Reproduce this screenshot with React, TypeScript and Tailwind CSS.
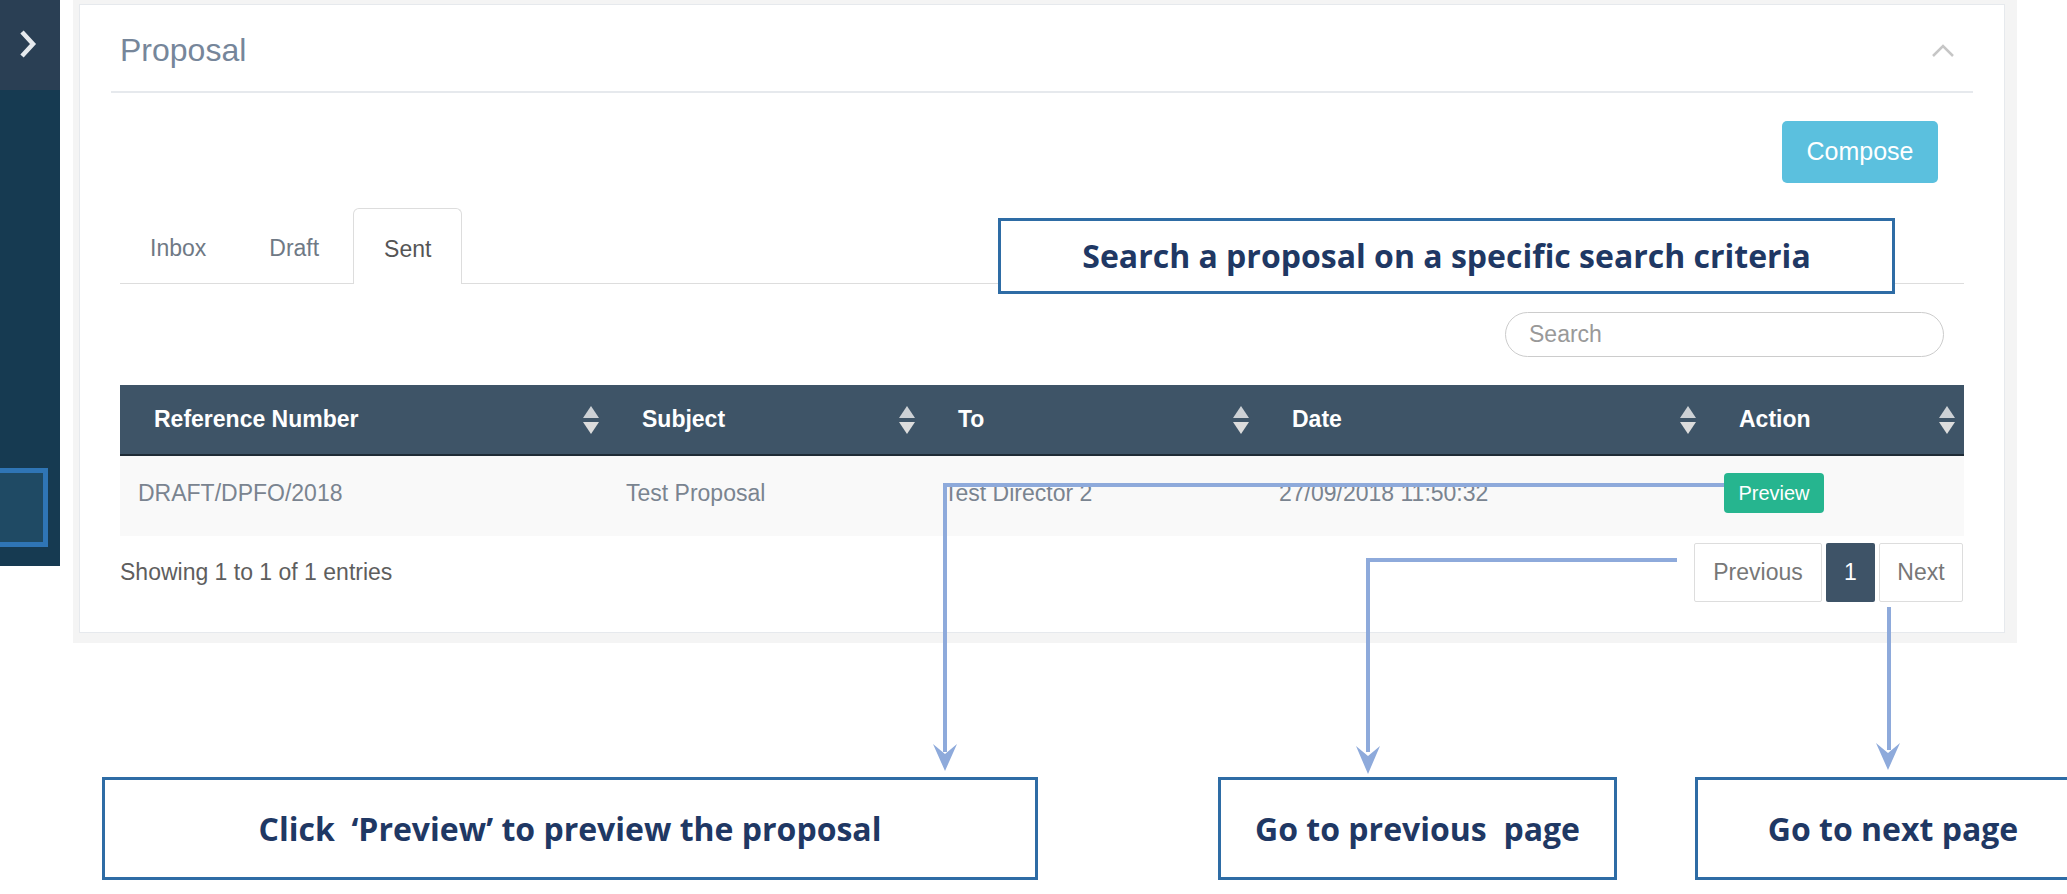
import React from 'react'

const cols = [
  { label: 'Reference Number', w: 'w-[488px]' },
  { label: 'Subject', w: 'w-[316px]' },
  { label: 'To', w: 'w-[334px]' },
  { label: 'Date', w: 'w-[447px]' },
  { label: 'Action', w: 'w-[259px]' },
]

const SortIcon = () => (
  <svg width="16" height="28" viewBox="0 0 16 28">
    <polygon points="8,0 16,12 0,12" fill="#cdd1d5" />
    <polygon points="0,16 16,16 8,28" fill="#dcdcdc" />
  </svg>
)

const Callout = ({ className, children }: { className: string; children: React.ReactNode }) => (
  <div
    className={`absolute flex items-center justify-center bg-white border-[3px] border-[#2e6ca5] font-['Open_Sans',sans-serif] font-bold text-[32px] text-[#1f3864] whitespace-pre ${className}`}
  >
    {children}
  </div>
)

export default function App() {
  return (
    <div className="relative w-[2067px] h-[894px] overflow-hidden bg-white font-['Liberation_Sans',Arial,sans-serif]">
      <div className="flex items-start">
        {/* sidebar */}
        <aside className="flex flex-col w-[60px] h-[566px]">
          <div className="flex h-[90px] items-center justify-center bg-[#2a3f54] pb-[2px] pr-[4px]">
            <svg width="20" height="32" viewBox="0 0 20 32">
              <polyline points="4,4 15,16 4,28" fill="none" stroke="#e6eaee" strokeWidth="4.5" />
            </svg>
          </div>
          <div className="flex-1 bg-[#163a51] pt-[378px]">
            <div className="w-[48px] h-[79px] border-[5px] border-l-0 border-[#2f75b5] bg-[#1f4a64]" />
          </div>
        </aside>

        {/* page */}
        <div className="ml-[13px] w-[1944px] bg-[#f4f4f4] pt-[4px] pl-[6px] pr-[12px] pb-[10px]">
          <div className="bg-white border border-[#e6e9ed]">
            {/* panel header */}
            <div className="mx-[31px] h-[88px] flex items-center justify-between pl-[9px] pr-[18px] pt-[4px] border-b-2 border-[#e6e9ed]">
              <h2 className="text-[32px] text-[#76869a]">Proposal</h2>
              <svg width="24" height="15" viewBox="0 0 24 15">
                <polyline points="2,13 12,3 22,13" fill="none" stroke="#c6c6c6" strokeWidth="2.5" />
              </svg>
            </div>

            <div className="px-[40px] pb-[30px]">
              <div className="flex justify-end mt-[28px] pr-[26px]">
                <button className="w-[156px] h-[62px] rounded-[5px] bg-[#5bc0de] text-white text-[25px]">
                  Compose
                </button>
              </div>

              {/* tabs */}
              <div className="mt-[25px] flex items-end h-[76px] border-b border-[#dddddd] pl-px">
                <div className="h-[75px] px-[29px] mr-[4px] flex items-center pt-[6px] text-[23px] text-[#6f7985]">Inbox</div>
                <div className="h-[75px] px-[30px] mr-[4px] flex items-center pt-[6px] text-[23px] text-[#6f7985]">Draft</div>
                <div className="h-[76px] -mb-px px-[30px] flex items-center pt-[6px] text-[23px] text-[#555555] bg-white border border-b-0 border-[#dddddd] rounded-t-[6px]">
                  Sent
                </div>
              </div>

              <div className="flex justify-end mt-[28px] pr-[20px]">
                <div className="w-[439px] h-[45px] rounded-full border border-[#cccccc] flex items-center pl-[23px] text-[23px] text-[#999999]">
                  Search
                </div>
              </div>

              {/* table */}
              <div className="mt-[28px]">
                <div className="flex h-[71px] bg-[#3e5467] border-b-2 border-[#1f2b36]">
                  {cols.map((c) => (
                    <div key={c.label} className={`${c.w} flex items-center justify-between pl-[34px] pr-[9px]`}>
                      <span className="text-[23px] font-bold text-white">{c.label}</span>
                      <SortIcon />
                    </div>
                  ))}
                </div>
                <div className="flex h-[80px] bg-[#f9f9f9] text-[23px] text-[#7a8490]">
                  <div className="w-[488px] pl-[18px] pt-[20px]">DRAFT/DPFO/2018</div>
                  <div className="w-[316px] pl-[18px] pt-[20px]">Test Proposal</div>
                  <div className="w-[334px] pl-[20px] pt-[20px]">Test Director 2</div>
                  <div className="w-[447px] pl-[21px] pt-[20px]">27/09/2018 11:50:32</div>
                  <div className="w-[259px] pl-[19px] pt-[17px]">
                    <span className="inline-flex items-center justify-center w-[100px] h-[40px] rounded-[4px] bg-[#26b58f] text-white text-[20px]">
                      Preview
                    </span>
                  </div>
                </div>
              </div>

              {/* footer */}
              <div className="mt-[7px] flex items-center justify-between">
                <span className="text-[23px] text-[#5e5e5e]">Showing 1 to 1 of 1 entries</span>
                <div className="flex gap-[4px] pr-px text-[23px] text-[#777777]">
                  <div className="w-[128px] h-[59px] flex items-center justify-center border border-[#dddddd] rounded-[2px]">Previous</div>
                  <div className="w-[49px] h-[59px] flex items-center justify-center rounded-[2px] bg-[#3e5367] text-white">1</div>
                  <div className="w-[84px] h-[59px] flex items-center justify-center border border-[#dddddd] rounded-[2px]">Next</div>
                </div>
              </div>
            </div>
          </div>
        </div>
      </div>

      {/* annotation connectors */}
      <svg className="absolute left-0 top-0 pointer-events-none" width="2067" height="894" viewBox="0 0 2067 894">
        <g fill="none" stroke="#8eaadb" strokeWidth="4">
          <path d="M1724 485 H945 V752" />
          <path d="M1677 560 H1368 V752" />
          <path d="M1889 607 V750" />
        </g>
        <g fill="#8eaadb">
          <polygon points="933,744 945,754 957,744 945,771" />
          <polygon points="1356,746 1368,756 1380,746 1368,774" />
          <polygon points="1876,743 1888,753 1900,743 1888,770" />
        </g>
      </svg>

      <Callout className="left-[998px] top-[218px] w-[897px] h-[76px]">Search a proposal on a specific search criteria</Callout>
      <Callout className="left-[102px] top-[777px] w-[936px] h-[103px]">Click  ‘Preview’ to preview the proposal</Callout>
      <Callout className="left-[1218px] top-[777px] w-[399px] h-[103px]">Go to previous  page</Callout>
      <Callout className="left-[1695px] top-[777px] w-[396px] h-[103px]">Go to next page</Callout>
    </div>
  )
}
